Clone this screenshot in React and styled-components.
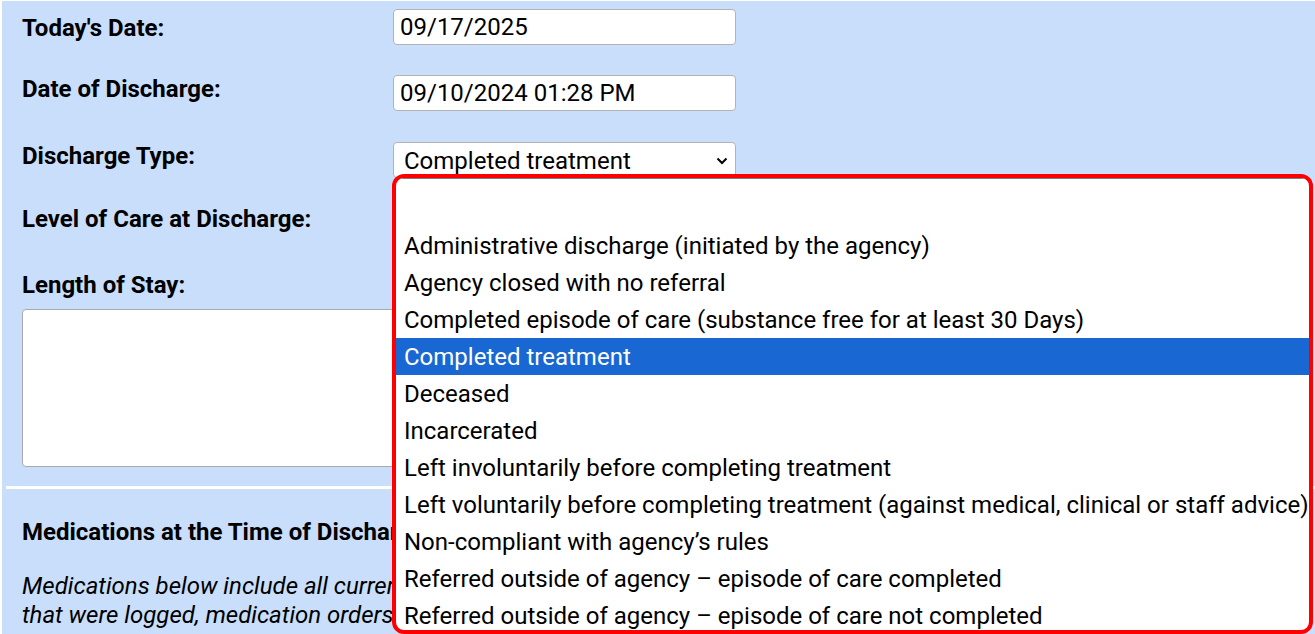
import React from "react";
import styled, { createGlobalStyle } from "styled-components";

const GlobalStyle = createGlobalStyle`
  html, body {
    margin: 0;
    padding: 0;
    height: 100%;
    overflow: hidden;
    background: #fff;
  }
  body {
    font-family: Roboto, "Liberation Sans", Arial, sans-serif;
    color: #000;
  }
`;

const Panel = styled.div`
  margin: 1px 0 0 2px;
  padding-top: 8px;
  min-height: 700px;
  background: #c9defb;
`;

const Fields = styled.div`
  display: flex;
  flex-direction: column;
  padding-left: 20px;
`;

const Row = styled.div`
  display: grid;
  grid-template-columns: 371px 343px;
  align-items: ${(p) => (p.$center ? "center" : "start")};
  margin-top: ${(p) => p.$gap || 0}px;
`;

const Label = styled.div`
  font-size: 24px;
  font-weight: 700;
  line-height: 24px;
  white-space: nowrap;
  margin-top: ${(p) => p.$top || 0}px;
`;

const TextInput = styled.input`
  box-sizing: border-box;
  height: 36px;
  width: 100%;
  padding: 0 6px;
  font: 400 24px Roboto, "Liberation Sans", Arial, sans-serif;
  color: #000;
  background: #fff;
  border: 1px solid #b3b3b3;
  border-radius: 4px;
  outline: none;
`;

const SelectWrap = styled.div`
  position: relative;
  height: 36px;
`;

const SelectBox = styled.div`
  box-sizing: border-box;
  display: flex;
  align-items: center;
  justify-content: space-between;
  height: 36px;
  padding: 1px 7px 0 10px;
  font-size: 24px;
  background: #fff;
  border: 1px solid #b3b3b3;
  border-radius: 4px;
`;

const TextArea = styled.textarea`
  box-sizing: border-box;
  display: block;
  width: 714px;
  height: 158px;
  margin-top: 12px;
  resize: none;
  background: #fff;
  border: 1px solid #aaa;
  border-radius: 4px;
  font: 400 24px Roboto, "Liberation Sans", Arial, sans-serif;
`;

const Divider = styled.div`
  height: 3px;
  margin: 19px 0 0 4px;
  background: #fff;
`;

const Section = styled.div`
  padding-left: 20px;
`;

const Heading = styled.div`
  margin-top: 31px;
  font-size: 24px;
  font-weight: 700;
  line-height: 24px;
  white-space: nowrap;
`;

const Note = styled.p`
  margin: 28px 0 0;
  font-size: 24px;
  font-style: italic;
  line-height: 29px;
  white-space: nowrap;
`;

const Dropdown = styled.div`
  position: absolute;
  top: 32px;
  left: -1px;
  z-index: 10;
  box-sizing: border-box;
  width: 921px;
  height: 460px;
  overflow: hidden;
  background: #fff;
  border: 4px solid #ff0000;
  border-radius: 12px;
`;

const OptionList = styled.div`
  padding-top: 11px;
  border-top: 1px solid #7d7d7d;
`;

const Option = styled.div`
  height: 37px;
  line-height: 38px;
  padding-left: 8px;
  font-size: 24px;
  white-space: nowrap;
  color: ${(p) => (p.$active ? "#fff" : "#000")};
  background: ${(p) => (p.$active ? "#1967d2" : "transparent")};
`;

const Chevron = () => (
  <svg width="12" height="8" viewBox="0 0 12 8">
    <polyline
      points="1.5,1.5 6,6 10.5,1.5"
      fill="none"
      stroke="#000"
      strokeWidth="2"
    />
  </svg>
);

const options = [
  "",
  "Administrative discharge (initiated by the agency)",
  "Agency closed with no referral",
  "Completed episode of care (substance free for at least 30 Days)",
  "Completed treatment",
  "Deceased",
  "Incarcerated",
  "Left involuntarily before completing treatment",
  "Left voluntarily before completing treatment (against medical, clinical or staff advice)",
  "Non-compliant with agency\u2019s rules",
  "Referred outside of agency \u2013 episode of care completed",
  "Referred outside of agency \u2013 episode of care not completed",
];

const selected = "Completed treatment";

export default function App() {
  return (
    <>
      <GlobalStyle />
      <Panel>
        <Fields>
          <Row $center>
            <Label $top={1}>Today's Date:</Label>
            <TextInput defaultValue="09/17/2025" />
          </Row>

          <Row $gap={30}>
            <Label $top={2}>Date of Discharge:</Label>
            <TextInput defaultValue="09/10/2024 01:28 PM" />
          </Row>

          <Row $gap={31}>
            <Label $top={2}>Discharge Type:</Label>
            <SelectWrap>
              <SelectBox>
                <span>{selected}</span>
                <Chevron />
              </SelectBox>
              <Dropdown>
                <OptionList>
                  {options.map((o, i) => (
                    <Option key={i} $active={o === selected}>
                      {o || "\u00a0"}
                    </Option>
                  ))}
                </OptionList>
              </Dropdown>
            </SelectWrap>
          </Row>

          <Row $gap={27}>
            <Label $top={2}>Level of Care at Discharge:</Label>
            <SelectBox>
              <span />
              <Chevron />
            </SelectBox>
          </Row>

          <Label $top={32}>Length of Stay:</Label>
          <TextArea />
        </Fields>

        <Divider />

        <Section>
          <Heading>Medications at the Time of Discharge:</Heading>
          <Note>
            Medications below include all current medications and PRN doses
            <br />
            that were logged, medication orders entered during the stay.
          </Note>
        </Section>
      </Panel>
    </>
  );
}
